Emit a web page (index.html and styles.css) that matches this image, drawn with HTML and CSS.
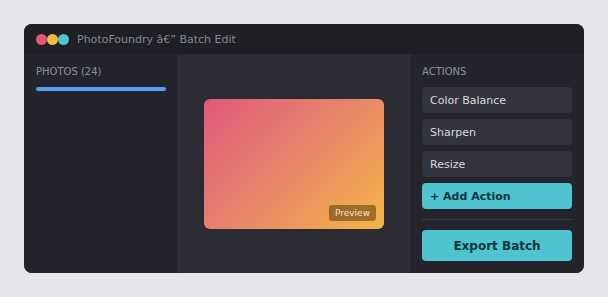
FILE: index.html
```html
<!DOCTYPE html>
<html>
<head>
<meta charset="utf-8">
<link rel="stylesheet" href="styles.css">
</head>
<body>
<div class="window">
  <div class="titlebar">
    <div class="dots">
      <span class="dot red"></span><span class="dot yellow"></span><span class="dot cyan"></span>
    </div>
    <span class="title">PhotoFoundry â€” Batch Edit</span>
  </div>
  <div class="main">
    <aside class="photos">
      <div class="label">PHOTOS (24)</div>
      <div class="progress"></div>
    </aside>
    <section class="canvas">
      <div class="preview">
        <span class="badge">Preview</span>
      </div>
    </section>
    <aside class="actions">
      <div class="label">ACTIONS</div>
      <div class="action">Color Balance</div>
      <div class="action">Sharpen</div>
      <div class="action">Resize</div>
      <div class="action add">+ Add Action</div>
      <div class="divider"></div>
      <div class="export">Export Batch</div>
    </aside>
  </div>
</div>
</body>
</html>
```
FILE: styles.css
```css
html, body { margin: 0; padding: 0; }
body {
  background: #e6e5ea;
  font-family: "DejaVu Sans", sans-serif;
  padding: 24px;
  width: 560px;
}
.window {
  width: 560px;
  height: 249px;
  border-radius: 8px;
  overflow: hidden;
  background: #24252c;
  display: flex;
  flex-direction: column;
}
.titlebar {
  height: 30px;
  background: #1f2026;
  display: flex;
  align-items: center;
  padding-left: 12px;
  box-sizing: border-box;
}
.dots { display: flex; }
.dot { width: 11px; height: 11px; border-radius: 50%; display: block; }
.red { background: #e2567c; }
.yellow { background: #f3bb3c; }
.cyan { background: #4bc3d1; }
.title {
  margin-left: 8px;
  font-size: 11px;
  color: #86878f;
}
.main {
  flex: 1;
  display: flex;
}
.photos {
  width: 155px;
  padding: 12px;
  box-sizing: border-box;
  background: #24252c;
  border-right: 1px solid #33343b;
}
.label {
  font-size: 10px;
  color: #8f9098;
  line-height: 12px;
  margin-bottom: 9px;
}
.progress {
  height: 4px;
  border-radius: 2px;
  background: #5c9cf2;
}
.canvas {
  flex: 1;
  background: #2b2c33;
  display: flex;
  align-items: center;
  justify-content: center;
  border-right: 1px solid #33343b;
}
.preview {
  width: 180px;
  height: 130px;
  border-radius: 6px;
  background: linear-gradient(135deg, #e05a7c 0%, #e8866a 50%, #f4b645 100%);
  position: relative;
}
.badge {
  position: absolute;
  right: 8px;
  bottom: 8px;
  background: rgba(90, 60, 10, 0.55);
  color: #f1e2cf;
  font-size: 9px;
  padding: 2px 6px;
  border-radius: 3px;
  line-height: 12px;
}
.actions {
  width: 174px;
  padding: 12px;
  box-sizing: border-box;
  background: #24252c;
  display: flex;
  flex-direction: column;
}
.action {
  height: 26px;
  background: #33343c;
  border-radius: 4px;
  color: #d7d8dd;
  font-size: 11px;
  display: flex;
  align-items: center;
  padding-left: 8px;
  margin-bottom: 6px;
}
.action.add {
  background: #4fc4d0;
  color: #10363c;
  font-weight: bold;
}
.divider {
  height: 1px;
  background: #3a3b42;
  margin: 4px 0 10px;
}
.export {
  height: 31px;
  background: #4fc4d0;
  color: #10363c;
  font-weight: bold;
  font-size: 12px;
  border-radius: 4px;
  display: flex;
  align-items: center;
  justify-content: center;
}
```
